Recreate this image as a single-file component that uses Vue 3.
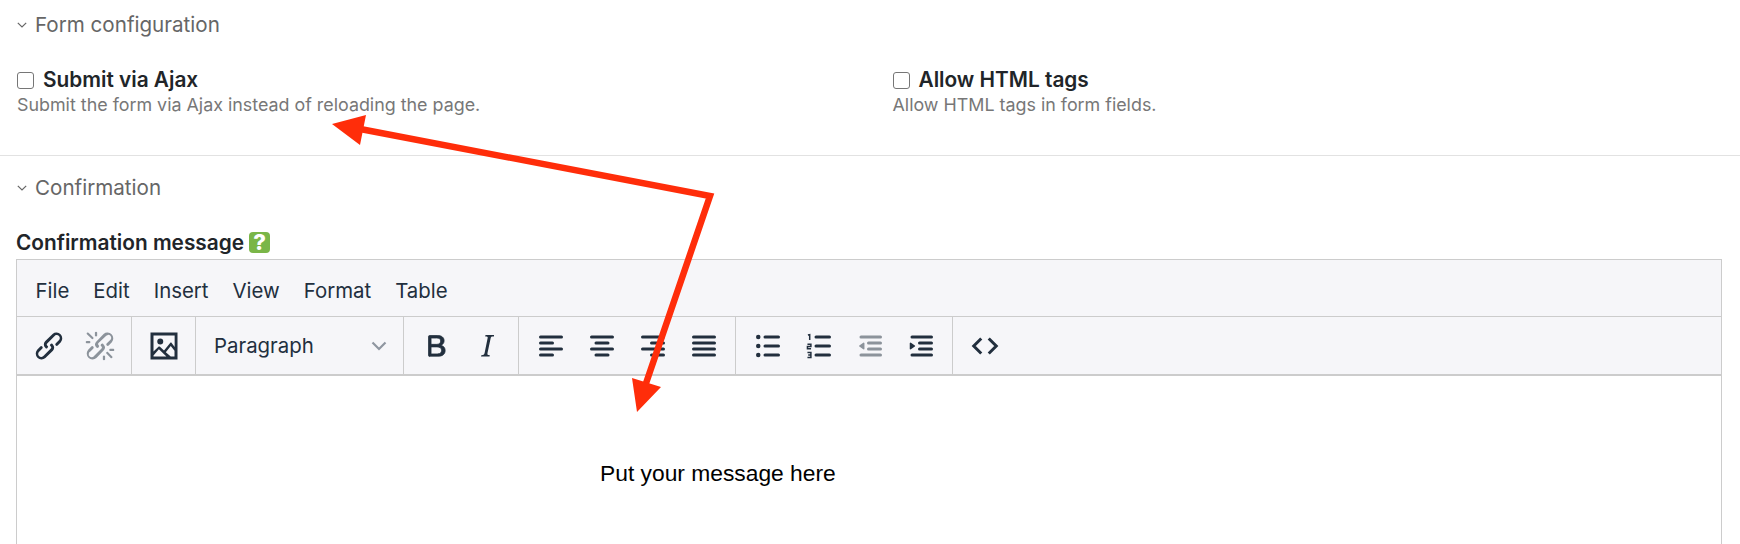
<script setup>
const menus = ['File', 'Edit', 'Insert', 'View', 'Format', 'Table']
const options = [
  { id: 'ajax', label: 'Submit via Ajax', hint: 'Submit the form via Ajax instead of reloading the page.' },
  { id: 'html', label: 'Allow HTML tags', hint: 'Allow HTML tags in form fields.' },
]
</script>

<template>
  <div class="page">
    <section class="panel panel-form">
      <h3 class="panel-title">
        <svg class="chevron" viewBox="0 0 10 6"><path d="M.8.8 5 5 9.2.8" /></svg>
        Form configuration
      </h3>
      <div class="options">
        <div v-for="opt in options" :key="opt.id" class="option">
          <label class="option-label"><input type="checkbox" class="check" />{{ opt.label }}</label>
          <div class="hint">{{ opt.hint }}</div>
        </div>
      </div>
    </section>

    <section class="panel panel-confirm">
      <h3 class="panel-title">
        <svg class="chevron" viewBox="0 0 10 6"><path d="M.8.8 5 5 9.2.8" /></svg>
        Confirmation
      </h3>
      <div class="field-label">Confirmation message <span class="help">?</span></div>

      <div class="editor">
        <div class="menubar">
          <span v-for="m in menus" :key="m" class="menu-item">{{ m }}</span>
        </div>
        <div class="toolbar">
          <div class="group">
            <button type="button" class="tb-btn" aria-label="Link">
              <svg viewBox="0 0 24 24"><path d="M6.2 12.3a1 1 0 0 1 1.4 1.4l-2 2a2 2 0 1 0 2.8 2.8l4.8-4.8a1 1 0 0 0 0-1.4 1 1 0 1 1 1.4-1.3 2.9 2.9 0 0 1 0 4.1L9.6 20a3.9 3.9 0 0 1-5.500-5.500l2.100-2.200zm11.600-.6a1 1 0 0 1-1.400-1.400l2-2a2 2 0 1 0-2.800-2.800L10.800 10.300a1 1 0 0 0 0 1.400 1 1 0 1 1-1.400 1.300 2.900 2.900 0 0 1 0-4.100L14.400 4a3.900 3.900 0 0 1 5.500 5.500l-2.100 2.200z" /></svg>
            </button>
            <button type="button" class="tb-btn off" aria-label="Unlink">
              <svg viewBox="0 0 24 24"><path d="M6.2 12.3a1 1 0 0 1 1.4 1.4l-2 2a2 2 0 1 0 2.6 2.800l4.800-4.800a1 1 0 0 0 0-1.400 1 1 0 1 1 1.400-1.300 2.900 2.900 0 0 1 0 4L9.600 20a3.900 3.900 0 0 1-5.500-5.500l2.100-2.200zm11.600-.6a1 1 0 0 1-1.400-1.400l2.100-2a2 2 0 1 0-2.700-2.800L11 10a1 1 0 0 0 0 1.400A1 1 0 1 1 9.600 13a2.900 2.900 0 0 1 0-4L14.400 4a3.900 3.900 0 0 1 5.500 5.500l-2.100 2.200zM7.600 6.300a.8.8 0 0 1-1 1.100L3.300 4.200a.7.7 0 1 1 1-1l3.300 3.100zM5.100 8.600a.8.8 0 0 1 0 1.500H3a.8.8 0 0 1 0-1.500h2.100zm5-3.500a.8.8 0 0 1-1.500 0V3a.8.8 0 0 1 1.500 0v2.100zm6 11.800a.8.8 0 0 1 1-1l3.200 3.200a.8.8 0 0 1-1 1l-3.200-3.200zm-2.200 2a.8.8 0 0 1 1.500 0V21a.8.8 0 0 1-1.500 0v-2.100zm5-3.500a.7.7 0 1 1 0-1.500H21a.8.8 0 0 1 0 1.500h-2.100z" /></svg>
            </button>
          </div>
          <div class="group">
            <button type="button" class="tb-btn" aria-label="Image">
              <svg viewBox="0 0 24 24"><path fill-rule="evenodd" d="M3 3h18v18H3V3zm2 2v10.700l3.300-3.200c.3-.3.7-.3 1 0L12 15l4.100-5c.3-.4.8-.4 1 0l2 2.600V5H5zm0 14h14v-3.800l-2.500-3.200-3.300 4.200 3.300 2.800h-2.900l-5-4.800L5 18.300V19zM9.500 7a2 2 0 1 1 0 4 2 2 0 0 1 0-4z" /></svg>
            </button>
          </div>
          <div class="group group-select">
            <div class="select">
              <span>Paragraph</span>
              <svg class="select-caret" viewBox="0 0 16 10"><path d="M1.500 1.500 8 8l6.500-6.500" /></svg>
            </div>
          </div>
          <div class="group">
            <button type="button" class="tb-btn" aria-label="Bold">
              <svg viewBox="0 0 24 24"><path d="M7.800 19c-.3 0-.5 0-.6-.2l-.2-.5V5.700c0-.2 0-.4.2-.5l.6-.2h5c1.500 0 2.700.3 3.500 1 .7.600 1.100 1.400 1.100 2.500a3 3 0 0 1-.6 1.900c-.4.600-1 1-1.600 1.200.9.100 1.600.5 2.100 1.100.5.600.8 1.400.8 2.300 0 1.200-.4 2.100-1.200 2.800-.8.700-2 1-3.600 1H7.800zm.9-8.100h3.700c.8 0 1.500-.2 2-.6.400-.4.700-.9.700-1.600s-.2-1.200-.7-1.500c-.4-.3-1.100-.5-2-.5H8.700v4.200zm0 6.400h4.100c1 0 1.700-.2 2.200-.6.500-.4.700-1 .7-1.800s-.3-1.300-.8-1.700c-.5-.4-1.300-.6-2.300-.6H8.700v4.700z" stroke="currentColor" stroke-width=".5" /></svg>
            </button>
            <button type="button" class="tb-btn" aria-label="Italic">
              <svg viewBox="0 0 24 24"><path d="m16.700 4.700-.1.900h-.3c-.6 0-1 0-1.400.3-.3.300-.4.600-.5 1.100l-2.100 9.800v.6c0 .5.400.800 1.400.800h.2l-.2.800H8l.2-.8h.2c1.100 0 1.800-.5 2-1.500l2-9.800.1-.5c0-.6-.4-.8-1.400-.8h-.3l.2-.9h5.800z" /></svg>
            </button>
          </div>
          <div class="group">
            <button type="button" class="tb-btn" aria-label="Align left">
              <svg viewBox="0 0 24 24"><path class="ln" d="M5 6h14M5 10h8M5 14h14M5 18h8" /></svg>
            </button>
            <button type="button" class="tb-btn" aria-label="Align center">
              <svg viewBox="0 0 24 24"><path class="ln" d="M5 6h14M8 10h8M5 14h14M8 18h8" /></svg>
            </button>
            <button type="button" class="tb-btn" aria-label="Align right">
              <svg viewBox="0 0 24 24"><path class="ln" d="M5 6h14M11 10h8M5 14h14M11 18h8" /></svg>
            </button>
            <button type="button" class="tb-btn" aria-label="Justify">
              <svg viewBox="0 0 24 24"><path class="ln" d="M5 6h14M5 10h14M5 14h14M5 18h14" /></svg>
            </button>
          </div>
          <div class="group">
            <button type="button" class="tb-btn" aria-label="Bullet list">
              <svg viewBox="0 0 24 24"><path class="ln" d="M10 6h9M10 12h9M10 18h9" /><circle cx="5.500" cy="6" r="1.500" /><circle cx="5.500" cy="12" r="1.500" /><circle cx="5.500" cy="18" r="1.500" /></svg>
            </button>
            <button type="button" class="tb-btn" aria-label="Numbered list">
              <svg viewBox="0 0 24 24"><path class="ln" d="M10 6h9M10 12h9M10 18h9" /><path class="num" d="M4.600 4.700 5.800 4.400V8M4.300 10.800h2.300V12.300H4.300V13.800H6.700M4.300 16.400H6.600V19.600H4.300M4.800 18H6.600" /></svg>
            </button>
            <button type="button" class="tb-btn off" aria-label="Outdent">
              <svg viewBox="0 0 24 24"><path class="ln" d="M6 6h13M11 10h8M11 14h8M6 18h13" /><path d="M7.500 9.800a.5.500 0 0 1 .8.400v3.600a.5.500 0 0 1-.8.400L4.900 12.400a.5.500 0 0 1 0-.8l2.600-1.800z" /></svg>
            </button>
            <button type="button" class="tb-btn" aria-label="Indent">
              <svg viewBox="0 0 24 24"><path class="ln" d="M6 6h13M11 10h8M11 14h8M6 18h13" /><path d="M5.300 9.800a.5.500 0 0 0-.8.400v3.600a.5.500 0 0 0 .8.400l2.600-1.800a.5.500 0 0 0 0-.8L5.300 9.800z" /></svg>
            </button>
          </div>
          <div class="group group-last">
            <button type="button" class="tb-btn" aria-label="Source code">
              <svg viewBox="0 0 24 24"><path class="ln ln-code" d="M9.500 7 4.500 12l5 5M14.500 7l5 5-5 5" /></svg>
            </button>
          </div>
        </div>
        <div class="editor-body">
          <p class="placeholder">Put your message here</p>
        </div>
      </div>
    </section>

    <!-- red arrows drawn on top of the screenshot -->
    <svg class="annotation" viewBox="0 0 1740 544">
      <path d="M355 128 710 196 642 395" fill="none" stroke="#ff2d0a" stroke-width="6.5" stroke-linejoin="miter" />
      <path d="M332 124 366 115 360 145zM637 412 632 378 661 387z" fill="#ff2d0a" />
    </svg>
  </div>
</template>

<style scoped>
.page {
  position: relative;
  width: 1740px;
  height: 544px;
  overflow: hidden;
  background: #fff;
  font-family: Inter, "Liberation Sans", sans-serif;
  color: #212529;
}

.panel-title {
  display: flex;
  align-items: center;
  margin: 0;
  font-size: 20.6px;
  line-height: 24px;
  font-weight: 400;
  color: #666;
}

.chevron {
  width: 10px;
  height: 6px;
  margin: 0 8px 0 1px;
  fill: none;
  stroke: #666;
  stroke-width: 1.2;
}

.panel-form {
  height: 156px;
  padding: 13px 0 0 16px;
  box-sizing: border-box;
  border-bottom: 1px solid #e2e2e2;
}

.options {
  display: grid;
  grid-template-columns: 1fr 1fr;
  column-gap: 27px;
  margin-top: 31px;
}

.option-label {
  display: flex;
  align-items: center;
  font-size: 20.8px;
  line-height: 24px;
  font-weight: 600;
}

.check {
  appearance: none;
  width: 17px;
  height: 17px;
  margin: 0 9px 0 1px;
  box-sizing: border-box;
  border: 1.5px solid #767676;
  border-radius: 3px;
  background: #fff;
}

.hint {
  margin-left: 1px;
  font-size: 17.87px;
  line-height: 26px;
  color: #777;
}

.panel-confirm {
  padding: 20px 18px 0 16px;
}

.field-label {
  display: flex;
  align-items: center;
  gap: 5px;
  margin-top: 31px;
  font-size: 20.8px;
  line-height: 24px;
  font-weight: 600;
}

.help {
  display: inline-flex;
  align-items: center;
  justify-content: center;
  width: 21px;
  height: 21px;
  margin-top: -2px;
  border-radius: 4px;
  background: #7ab648;
  color: #fff;
  font-size: 22px;
  font-weight: 800;
  line-height: 1;
}

.editor {
  margin-top: 4px;
  height: 290px;
  border: 1px solid #ccc;
  border-bottom: 0;
  color: #222f3e;
}

.menubar {
  display: flex;
  align-items: center;
  height: 57px;
  padding: 5px 0 0 6.5px;
  box-sizing: border-box;
  background: #f6f6f9;
  border-bottom: 1px solid #ccc;
}

.menu-item {
  padding: 0 12px;
  font-size: 20.4px;
}

.toolbar {
  display: flex;
  height: 59px;
  box-sizing: border-box;
  background: #f6f6f9;
  border-bottom: 2px solid #ccc;
}

.group {
  display: flex;
  align-items: center;
  padding: 0 6px;
  border-right: 1px solid #ccc;
}

.group-last {
  border-right: 0;
}

.group-select {
  width: 208px;
  box-sizing: border-box;
  padding: 0 0 0 18px;
}

.select {
  display: flex;
  align-items: center;
  justify-content: space-between;
  width: 100%;
  padding-right: 16px;
  font-size: 20.4px;
}

.select-caret {
  width: 16px;
  height: 10px;
  fill: none;
  stroke: #8f96a0;
  stroke-width: 2.2;
}

.tb-btn {
  display: flex;
  align-items: center;
  justify-content: center;
  width: 51px;
  height: 51px;
  padding: 0;
  border: 0;
  background: transparent;
  color: #222f3e;
}

.tb-btn svg {
  width: 36px;
  height: 36px;
  fill: currentColor;
}

.tb-btn.off {
  color: rgba(34, 47, 62, 0.5);
}

.ln {
  fill: none;
  stroke: currentColor;
  stroke-width: 2;
  stroke-linecap: round;
}

.ln-code {
  stroke-linecap: butt;
}

.num {
  fill: none;
  stroke: currentColor;
  stroke-width: 1;
}

.editor-body {
  background: #fff;
}

.placeholder {
  margin: 0;
  padding: 82px 0 0 583px;
  font-family: "Liberation Sans", Arial, sans-serif;
  font-size: 22.8px;
  line-height: 30px;
  color: #000;
}

.annotation {
  position: absolute;
  inset: 0;
  width: 1740px;
  height: 544px;
  pointer-events: none;
}
</style>
